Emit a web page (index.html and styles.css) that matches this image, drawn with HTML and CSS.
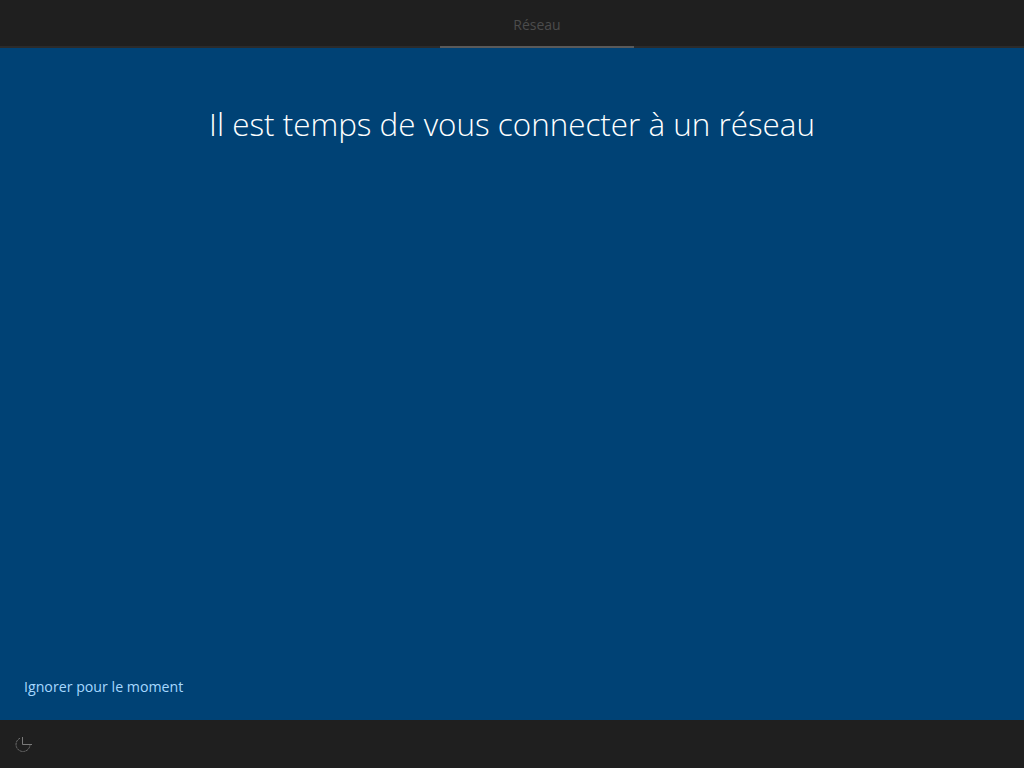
FILE: index.html
```html
<!DOCTYPE html>
<html lang="fr">
<head>
  <meta charset="UTF-8">
  <title>Réseau</title>
  <link rel="stylesheet" href="styles.css">
</head>
<body>
  <!-- Top bar -->
  <header class="top-bar">
    <div class="step">Réseau</div>
  </header>

  <!-- Main -->
  <main class="content">
    <h1>Il est temps de vous connecter à un réseau</h1>
    <a class="skip" href="#">Ignorer pour le moment</a>
  </main>

  <!-- Bottom bar -->
  <footer class="bottom-bar">
    <svg class="access-icon" width="18" height="16" viewBox="0 0 18 16" fill="none">
      <path d="M5 2.2A7 7 0 1 0 15 9" stroke="#6e6e6e" stroke-width="1" stroke-dasharray="2.5 0.6"/>
      <path d="M7.5 1V8.5H17" stroke="#7a7a7a" stroke-width="1"/>
    </svg>
  </footer>
</body>
</html>
```
FILE: styles.css
```css
* {
  margin: 0;
  padding: 0;
  box-sizing: border-box;
}

body {
  width: 1024px;
  height: 768px;
  display: flex;
  flex-direction: column;
  overflow: hidden;
  font-family: 'Open Sans', sans-serif;
  background-color: #004275;
}

/* Top bar */
.top-bar {
  height: 48px;
  display: flex;
  justify-content: center;
  padding-left: 50px;
  background-color: #1f1f1f;
  border-bottom: 2px solid #2b2b2b;
}

.step {
  width: 194px;
  height: 48px;
  padding-top: 15px;
  text-align: center;
  font-size: 14px;
  line-height: 19px;
  color: #4c4c4c;
  border-bottom: 2px solid #5a5a5a;
}

/* Main */
.content {
  flex: 1;
  display: flex;
  flex-direction: column;
  justify-content: space-between;
  padding: 52px 24px 24px;
}

h1 {
  text-align: center;
  font-size: 31.4px;
  line-height: 48px;
  font-weight: 300;
  color: #fff;
}

.skip {
  font-size: 14.2px;
  line-height: 19px;
  color: #a6d8ff;
  text-decoration: none;
}

/* Bottom bar */
.bottom-bar {
  height: 48px;
  display: flex;
  align-items: center;
  padding-left: 15px;
  background-color: #1f1f1f;
}
```
